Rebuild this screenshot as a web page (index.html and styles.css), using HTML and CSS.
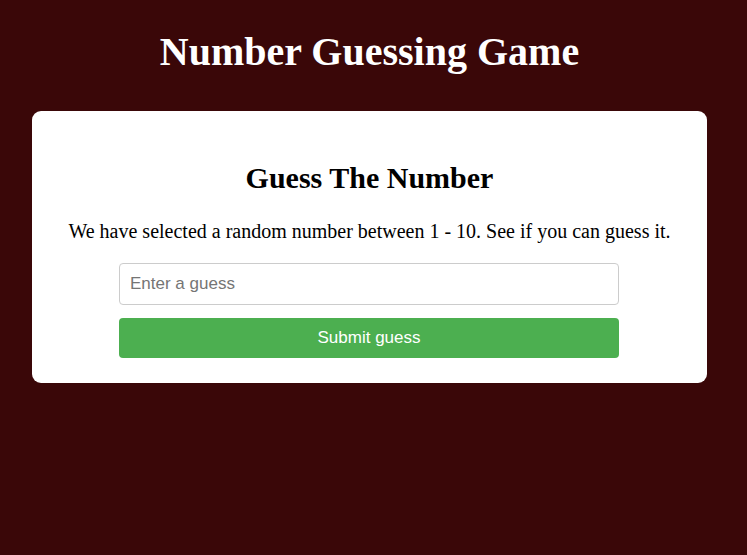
FILE: index.html
```html
<!DOCTYPE html>
<html>
<head>
<meta charset="utf-8">
<title>Number Guessing Game</title>
<link rel="stylesheet" href="styles.css">
</head>
<body>
  <h1 class="title">Number Guessing Game</h1>
  <div class="card">
    <h2 class="card-title">Guess The Number</h2>
    <p class="card-text">We have selected a random number between 1 - 10. See if you can guess it.</p>
    <form class="guess-form">
      <input class="guess-input" type="text" placeholder="Enter a guess">
      <button class="guess-button" type="button">Submit guess</button>
    </form>
  </div>
</body>
</html>
```
FILE: styles.css
```css
html, body {
  margin: 0;
  padding: 0;
}
body {
  background: #3a0708;
  font-family: "Liberation Serif", "Times New Roman", serif;
  padding: 0 40px 0 32px;
}
.title {
  color: #fff;
  text-align: center;
  font-size: 40px;
  font-weight: bold;
  margin: 0;
  padding: 30px 0 37px;
  line-height: 44px;
}
.card {
  background: #fff;
  border-radius: 9px;
  padding: 49px 0 25px;
  display: flex;
  flex-direction: column;
  align-items: center;
}
.card-title {
  font-size: 30px;
  margin: 0 0 23px;
  line-height: 36px;
}
.card-text {
  font-size: 20px;
  margin: 0 0 20px;
  line-height: 24px;
}
.guess-form {
  width: 500px;
  margin-right: 1px;
  display: flex;
  flex-direction: column;
  gap: 13px;
}
.guess-input {
  box-sizing: border-box;
  height: 42px;
  border: 1px solid #ccc;
  border-radius: 4px;
  padding: 0 10px;
  font-family: "Liberation Sans", Arial, sans-serif;
  font-size: 17px;
  margin: 0;
}
.guess-input::placeholder {
  color: #757575;
}
.guess-button {
  height: 40px;
  border: none;
  border-radius: 4px;
  background: #4caf50;
  color: #fff;
  font-family: "Liberation Sans", Arial, sans-serif;
  font-size: 17px;
  margin: 0;
}
```
